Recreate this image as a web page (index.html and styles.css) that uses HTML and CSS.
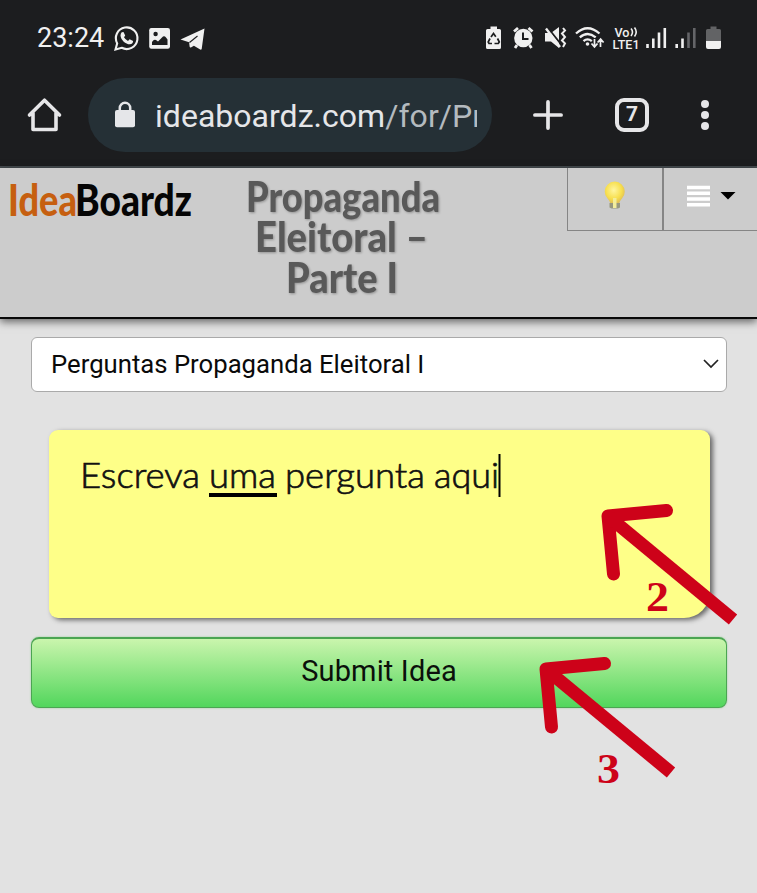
FILE: index.html
```html
<!DOCTYPE html>
<html lang="pt-BR">
<head>
<meta charset="utf-8">
<meta name="viewport" content="width=device-width">
<title>IdeaBoardz</title>
<link rel="stylesheet" href="styles.css">
</head>
<body>
<div class="chrome">
  <div class="status">
    <span class="clock">23:24</span>
    <svg class="ic" width="28" height="28" viewBox="113 24 28 28"><path d="M115.500 49.500l1.700-6.100a10.800 10.800 0 1 1 4.500 4.400z" fill="none" stroke="#f0f0f0" stroke-width="2.100"/><path d="M121.700 32.300l1.800-.2 1.700 3.500-1.200 1.700q1.400 2.500 4 3.700l1.600-1.700 3.500 1.700q.1 2.800-3.300 3.300c-4.200-.1-8.800-4.300-9.300-8.600q0-2.300 1.200-3.400" fill="#f0f0f0"/></svg>
    <svg class="ic pic" width="22" height="28" viewBox="149 24 22 28"><rect x="149.200" y="28" width="20.800" height="20.800" rx="2.200" fill="#f0f0f0"/><circle cx="155.600" cy="34" r="2.200" fill="#1c1d1f"/><path d="M152 45v-3q2-3.300 4-2l2 1.500 5-5q1.500-1 3 1l1.500 2v5.500z" fill="#1c1d1f"/></svg>
    <svg class="ic plane" width="26" height="28" viewBox="180 24 26 28"><path d="M180.500 39.500l24-11-2.800 20.500q-.5 1-1.500.5l-6.300-3.800-3 1.700q-1 .5-1.300-.8l-.5-4.300z" fill="#f0f0f0"/><path d="M189.500 42.500l8-6.500" stroke="#1c1d1f" stroke-width="1.100" fill="none"/></svg>
    <span class="grow"></span>
    <svg class="ic" width="236" height="32" viewBox="486 22 236 32">
      <g fill="#f0f0f0">
        <path d="M490.500 26.500h6.500v2.500h2.500q1.500 0 1.500 1.500v17q0 1.500-1.500 1.500h-12q-1.500 0-1.500-1.500v-17q0-1.500 1.500-1.500h3z"/>
        <path d="M491 37l2.500-3.500 2.300 3.200M497.500 38.500l1.800 3.500-1 1.500h-3.800M492 43.500h-3l-.8-1.500 1.800-3.500" fill="none" stroke="#1c1d1f" stroke-width="1.700"/>
        <circle cx="523.300" cy="38" r="9.200"/><path d="M514 31.500l4-3.500M528.500 28l4 3.500M517 45l-2 3M529.500 45l2 3" stroke="#f0f0f0" stroke-width="2.800"/><path d="M523 32.500v6.500h5.500" fill="none" stroke="#1c1d1f" stroke-width="2"/>
        <path d="M545 33h6l8-6v21l-8-6.500h-6z"/><path d="M548 28l12 15" stroke="#1c1d1f" stroke-width="2"/><path d="M546 28.500l14 18.500" stroke="#f0f0f0" stroke-width="2.400"/><path d="M563 28l2 2.500-3 3 3 3.500-3 3.500 3 3-2 3.500" fill="none" stroke="#f0f0f0" stroke-width="2"/>
      </g>
      <g fill="none" stroke="#f0f0f0" stroke-width="2.300"><path d="M576 33.500q11.500-10.500 23.500 0M579.800 37.400q7.700-6.700 15.900 0M583.500 41.200q4-3.600 8.300 0"/><path d="M594.500 39v7.500M591.500 43.500l3 3.500 3-3.500M600.500 47v-7.500M597.600 42.500l3-3.500 3 3.500" stroke-width="1.700"/></g>
      <circle cx="587.500" cy="44" r="1.800" fill="#f0f0f0"/>
      <text x="614.500" y="36.600" class="lte" textLength="15" lengthAdjust="spacingAndGlyphs">Vo</text><text x="612.500" y="49" class="lte" textLength="27" lengthAdjust="spacingAndGlyphs">LTE1</text>
      <path d="M631 28.500q3 3.500 0 7.500M634.500 27.500q3.500 4.500 0 9" fill="none" stroke="#f0f0f0" stroke-width="1.600"/>
      <path d="M647.500 44v4M653.300 38.500v9.500M659 32.500v15.500M664.800 28v20M676.700 44v4M682.500 38.500v9.500" stroke="#f0f0f0" stroke-width="2.600"/><path d="M688.500 32.500v15.500M694.300 28v20" stroke="#646568" stroke-width="2.600"/>
      <path d="M710.500 26.500h6v2.500h3q1.500 0 1.500 1.500v11h-15v-11q0-1.500 1.500-1.500h3z" fill="#626365"/><path d="M706 41h15v6q0 2-2 2h-11q-2 0-2-2z" fill="#f0f0f0"/>
    </svg>
  </div>
  <div class="toolbar">
    <svg class="home" width="36" height="36" viewBox="27 97 36 36"><path d="M29.500 115l15-14.800 15 14.800M33 113v16.500h23v-16.500" fill="none" stroke="#e6e6e8" stroke-width="3.600" stroke-linejoin="round" stroke-linecap="round"/></svg>
    <div class="address">
      <svg width="22" height="28" viewBox="114 100 22 28"><rect x="115" y="109" width="20" height="17.200" rx="2" fill="#e5e6e9"/><path d="M119.800 110v-3a5.200 5.200 0 0 1 10.400 0v3" fill="none" stroke="#e5e6e9" stroke-width="2.500"/></svg>
      <div class="url">ideaboardz.com<span class="path">/for/Pr</span></div>
    </div>
    <svg class="plus" width="30" height="30" viewBox="0 0 30 30"><path d="M15 1.900v26.200M1.900 15h26.200" stroke="#e6e6e8" stroke-width="3.700" stroke-linecap="round"/></svg>
    <div class="tabs">7</div>
    <svg class="dots" width="10" height="32" viewBox="0 0 10 32" fill="#e6e6e8"><circle cx="5" cy="5" r="4"/><circle cx="5" cy="16" r="4"/><circle cx="5" cy="27" r="4"/></svg>
  </div>
</div>

<header class="header">
  <svg class="logo" width="190" height="46" viewBox="6 176 190 46"><text x="8" y="215.500" class="idea" textLength="69" lengthAdjust="spacingAndGlyphs">Idea</text><text x="75" y="215.500" class="boardz" textLength="117" lengthAdjust="spacingAndGlyphs">Boardz</text></svg>
  <svg class="title" width="210" height="132" viewBox="240 170 210 132"><text x="246" y="212" textLength="194" lengthAdjust="spacingAndGlyphs">Propaganda</text><text x="255" y="251.500" textLength="173" lengthAdjust="spacingAndGlyphs">Eleitoral –</text><text x="286" y="292.500" textLength="112" lengthAdjust="spacingAndGlyphs">Parte I</text></svg>
  <div class="tool bulb"><svg width="24" height="30" viewBox="603 181 24 30"><defs><radialGradient id="glow" cx=".45" cy=".38" r=".6"><stop offset="0" stop-color="#fff6a0"/><stop offset=".65" stop-color="#f7df4e"/><stop offset="1" stop-color="#dfbe55"/></radialGradient></defs><path d="M610.500 204q-.5-3-3-5.500a10 10 0 1 1 14.500 0q-2.500 2.500-3 5.500z" fill="url(#glow)"/><path d="M609.500 203h10.500v4.500l-2 1h-6.500l-2-1z" fill="#98987e"/><path d="M613 198v10h3.500v-10z" fill="#f3ed9b"/></svg></div>
  <div class="tool menu"><svg width="50" height="24" viewBox="687 184 50 24"><path d="M687 187.500h23M687 193.300h23M687 199h23M687 204.800h23" stroke="#fff" stroke-width="3.500"/><path d="M720.500 192h15l-7.500 7.500z" fill="#000"/></svg></div>
</header>

<main class="content">
  <div class="select"><span>Perguntas Propaganda Eleitoral I</span><svg width="18" height="12" viewBox="0 0 18 12"><path d="M2 2l7 7 7-7" fill="none" stroke="#222" stroke-width="1.700"/></svg></div>
  <div class="note"><svg width="440" height="56" viewBox="76 450 440 56"><text x="80" y="487.500" textLength="120" lengthAdjust="spacingAndGlyphs">Escreva</text><text x="209" y="487.500" textLength="67" lengthAdjust="spacingAndGlyphs">uma</text><text x="285" y="487.500" textLength="140" lengthAdjust="spacingAndGlyphs">pergunta</text><text x="434" y="487.500" textLength="65" lengthAdjust="spacingAndGlyphs">aqui</text><path d="M209 493h68v4h-68zM498.500 454h2v43h-2z"/></svg></div>
  <button class="submit">Submit Idea</button>
</main>

<svg class="marks" width="757" height="320" viewBox="0 480 757 320">
  <defs><g id="arrow" fill="none" stroke="#cd0219" stroke-width="13"><path d="M666.500 510.500L608 516l5.500 58" stroke-linecap="round" stroke-linejoin="round"/><path d="M609 517l124 102.500"/></g></defs>
  <use href="#arrow"/><use href="#arrow" x="-62" y="153"/>
  <text x="646" y="610.500" textLength="23" lengthAdjust="spacingAndGlyphs">2</text><text x="597" y="783" textLength="23" lengthAdjust="spacingAndGlyphs">3</text>
</svg>
</body>
</html>
```
FILE: styles.css
```css
* { box-sizing: border-box; }
body { margin: 0; height: 893px; overflow: hidden; position: relative; background: #e2e2e2; font-family: Roboto, "Liberation Sans", sans-serif; }
svg { display: block; flex: none; overflow: visible; }
.chrome { height: 168px; background: #1c1d1f; border-bottom: 2px solid #454b4f; }
.status { height: 78px; padding: 0 35px 2px 37px; display: flex; align-items: center; }
.clock { width: 76px; font-size: 27px; line-height: 32px; color: #f0f0f0; white-space: nowrap; }
.pic { margin-left: 8px; }
.plane { margin-left: 9px; }
.grow { flex: 1; }
.lte { font: 500 12.500px Roboto, sans-serif; fill: #f0f0f0; }
.toolbar { height: 74px; display: flex; align-items: center; }
.home { margin-left: 27px; }
.address { width: 404px; height: 74px; margin-left: 25px; padding-left: 26px; border-radius: 37px; background: #253036; display: flex; align-items: center; }
.url { width: 322px; margin-left: 19px; padding-top: 1px; overflow: hidden; white-space: nowrap; font-size: 32px; line-height: 44px; letter-spacing: .03px; color: #e5e6e9; }
.path { color: #b4babf; }
.plus { margin-left: 41px; }
.tabs { width: 34px; height: 34px; margin-left: 52px; border: 4px solid #e6e6e8; border-radius: 9px; color: #e6e6e8; font-size: 21px; font-weight: 700; line-height: 25px; text-align: center; }
.dots { margin-left: 51px; }
.header { height: 151px; display: flex; align-items: flex-start; background: #ccc; border-bottom: 2px solid #090909; box-shadow: 0 3px 8px rgba(0,0,0,.55); }
.logo { margin: 8px 0 0 6px; }
.idea, .boardz { font: 900 44px Lato, sans-serif; fill: #c65f10; }
.boardz { fill: #050505; }
.title { margin: 2px 117px 0 44px; filter: drop-shadow(1px 1px 1px rgba(0,0,0,.28)); }
.title text { font: 900 42px Lato, sans-serif; fill: #595959; }
.tool { height: 63px; border: 1px solid #858585; border-top: 0; display: flex; align-items: flex-start; }
.bulb { width: 96px; padding: 13px 0 0 35px; }
.menu { width: 94px; border-right: 0; padding: 16px 0 0 23px; }
.content { padding: 18px 30px 0 31px; }
.select { height: 55px; padding: 0 6px 1px 19px; display: flex; align-items: center; justify-content: space-between; background: #fff; border: 1px solid #aaa; border-radius: 6px; color: #0a0a0a; font-size: 25.700px; }
.note { width: 661px; height: 188px; margin: 38px 0 0 18px; padding: 20px 0 0 27px; background: #feff88; border-radius: 9px 9px 26px 9px; box-shadow: 3px 2px 5px rgba(0,0,0,.55); }
.note text { font: 300 35px Lato, sans-serif; fill: #111; stroke: #111; stroke-width: .7px; }
.submit { display: block; width: 100%; height: 71px; margin-top: 19px; padding: 0 0 4px; border: 1px solid #4ba552; border-top-width: 2px; border-radius: 8px; background: linear-gradient(#caf5ad, #52d65c); box-shadow: 0 0 2px #91cf91; color: #0b100b; font: 29px Roboto, sans-serif; letter-spacing: .15px; }
.marks { position: absolute; left: 0; top: 480px; pointer-events: none; }
.marks text { font: bold 43px "Liberation Serif", serif; fill: #cd0219; }
```
